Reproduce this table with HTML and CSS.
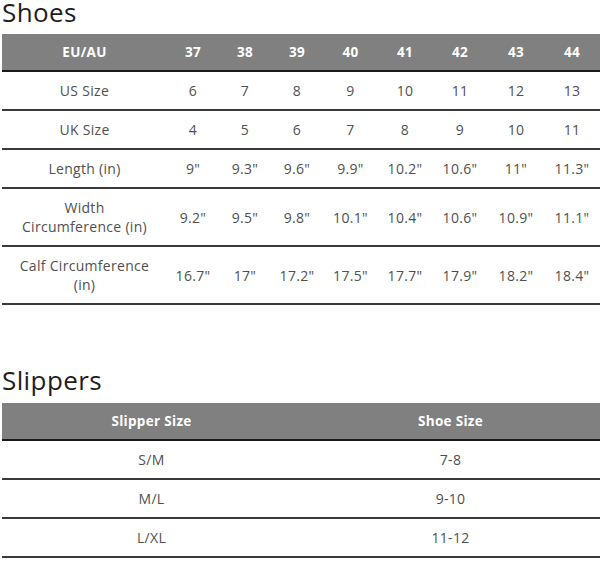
FILE: index.html
```html
<!DOCTYPE html>
<html lang="en">
<head>
<meta charset="utf-8">
<title>Size Guide</title>
<link rel="stylesheet" href="styles.css">
</head>
<body>
<section class="guide shoes">
  <h2 class="title">Shoes</h2>
  <table class="chart chart-shoes">
    <colgroup>
      <col class="c-label"><col class="c52"><col class="c52"><col class="c52"><col class="c55"><col class="c54"><col class="c56"><col class="c56"><col class="c56">
    </colgroup>
    <thead>
      <tr><th>EU/AU</th><th>37</th><th>38</th><th>39</th><th>40</th><th>41</th><th>42</th><th>43</th><th>44</th></tr>
    </thead>
    <tbody>
      <tr><td class="label">US Size</td><td>6</td><td>7</td><td>8</td><td>9</td><td>10</td><td>11</td><td>12</td><td>13</td></tr>
      <tr><td class="label">UK Size</td><td>4</td><td>5</td><td>6</td><td>7</td><td>8</td><td>9</td><td>10</td><td>11</td></tr>
      <tr><td class="label">Length (in)</td><td>9"</td><td>9.3"</td><td>9.6"</td><td>9.9"</td><td>10.2"</td><td>10.6"</td><td>11"</td><td>11.3"</td></tr>
      <tr><td class="label">Width<br>Circumference (in)</td><td>9.2"</td><td>9.5"</td><td>9.8"</td><td>10.1"</td><td>10.4"</td><td>10.6"</td><td>10.9"</td><td>11.1"</td></tr>
      <tr><td class="label">Calf Circumference<br>(in)</td><td>16.7"</td><td>17"</td><td>17.2"</td><td>17.5"</td><td>17.7"</td><td>17.9"</td><td>18.2"</td><td>18.4"</td></tr>
    </tbody>
  </table>
</section>
<section class="guide slippers">
  <h2 class="title">Slippers</h2>
  <table class="chart chart-slippers">
    <colgroup><col class="half"><col class="half"></colgroup>
    <thead>
      <tr><th>Slipper Size</th><th>Shoe Size</th></tr>
    </thead>
    <tbody>
      <tr><td>S/M</td><td>7-8</td></tr>
      <tr><td>M/L</td><td>9-10</td></tr>
      <tr><td>L/XL</td><td>11-12</td></tr>
    </tbody>
  </table>
</section>
</body>
</html>
```
FILE: styles.css
```css
html, body {
  margin: 0;
  padding: 0;
  background: #ffffff;
}
body {
  padding: 0 0 0 2px;
  font-family: "Open Sans", "Noto Sans", sans-serif;
  color: #444444;
}
.title {
  margin: 0 0 10px 0;
  font-family: "Open Sans", "Noto Sans", sans-serif;
  font-weight: 400;
  font-size: 26px;
  line-height: 24px;
  letter-spacing: 0.4px;
  color: #1e1e1e;
}
.slippers {
  margin-top: 63px;
}
.slippers .title {
  margin-bottom: 11px;
}
.chart {
  width: 598px;
  border-collapse: collapse;
  table-layout: fixed;
  font-size: 14px;
  line-height: 19px;
}
.chart th {
  background: #808080;
  color: #ffffff;
  font-weight: 700;
  font-size: 13.5px;
  letter-spacing: 0.3px;
  text-align: center;
  padding: 9px 0 8px;
  border-bottom: 2px solid #1a1a1a;
}
.chart td {
  text-align: center;
  padding: 9px 0;
  border-bottom: 2px solid #3a3a3a;
  color: #505050;
  letter-spacing: 0.3px;
}
.chart td.label {
  padding: 9px 10px;
}
.c-label { width: 165px; }
.c52 { width: 52px; }
.c54 { width: 54px; }
.c55 { width: 55px; }
.c56 { width: 56px; }
.half { width: 50%; }
```
